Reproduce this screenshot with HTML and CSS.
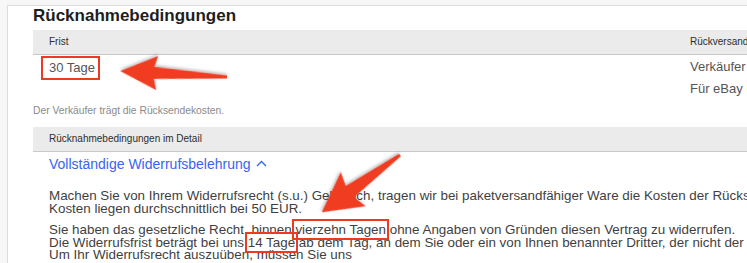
FILE: index.html
```html
<!DOCTYPE html>
<html lang="de">
<head>
    <meta charset="UTF-8">
    <meta name="viewport" content="width=device-width, initial-scale=1.0">
    <title>Rücknahmebedingungen</title>
    <link rel="stylesheet" href="styles.css">
</head>
<body>
    <div class="frame">
        <h2 class="title">Rücknahmebedingungen</h2>

        <div class="table">
            <div class="head">Frist</div>
            <div class="head head-right">Rückversandkosten</div>
            <div class="cell"><span class="mark mark-big">30 Tage</span></div>
            <div class="cell cell-right">Verkäufer trägt Rückversandkosten<br>Für eBay Plus-Artikel kostenlos</div>
        </div>

        <p class="note">Der Verkäufer trägt die Rücksendekosten.</p>

        <div class="head head-wide">Rücknahmebedingungen im Detail</div>

        <div class="details">
            <a class="toggle" href="#">Vollständige Widerrufsbelehrung<svg class="chevron" width="11" height="7" viewBox="0 0 11 7"><path d="M1 6 L5.5 1.5 L10 6" fill="none" stroke="#3665f3" stroke-width="1.4"/></svg></a>

            <p class="text">Machen Sie von Ihrem Widerrufsrecht (s.u.) Gebrauch, tragen wir bei paketversandfähiger Ware die Kosten der Rücksendung. Die<br>Kosten liegen durchschnittlich bei 50 EUR.</p>

            <p class="text">Sie haben das gesetzliche Recht, binnen <span class="mark">vierzehn Tagen</span> ohne Angaben von Gründen diesen Vertrag zu widerrufen.<br>Die Widerrufsfrist beträgt bei uns <span class="mark">14 Tage</span> ab dem Tag, an dem Sie oder ein von Ihnen benannter Dritter, der nicht der Beförderer ist,<br>Um Ihr Widerrufsrecht auszuüben, müssen Sie uns<br>Gestatten Sie GmbH</p>
        </div>
    </div>

    <!-- Pfeile der Markierung -->
    <svg class="arrows" width="747" height="263" viewBox="0 0 747 263">
        <defs>
            <filter id="shadow" x="-20%" y="-20%" width="140%" height="140%">
                <feDropShadow dx="0" dy="1.5" stdDeviation="1.5" flood-color="#000" flood-opacity="0.3"/>
            </filter>
        </defs>
        <polygon filter="url(#shadow)" fill="#f03d24"
            transform="translate(227 77) rotate(183.2)"
            points="0,-1.5 73,-6 70,-17 107,0 70,17 73,6 0,1.5"/>
        <polygon filter="url(#shadow)" fill="#f03d24"
            transform="translate(400 155) rotate(143.8)"
            points="0,-1.5 62,-7 58,-21 97,0 58,21 62,7 0,1.5"/>
    </svg>
</body>
</html>
```

FILE: styles.css
```css
body {
    margin: 0;
    background-color: #f7f7f7;
    font-family: 'Liberation Sans', Arial, sans-serif;
    color: #3f3f3f;
    overflow: hidden;
    height: 263px;
}
.frame {
    margin: 5px 0 0 7px;
    width: 900px;
    height: 400px;
    background-color: #fff;
    border-top: 1px solid #dcdcdc;
    border-left: 1px solid #dcdcdc;
    padding-left: 25px;
}
.title {
    margin: 0 0 4px;
    font-size: 17px;
    line-height: 20px;
    font-weight: 700;
    color: #1e1e1e;
}
.table {
    display: grid;
    grid-template-columns: 641px 1fr;
}
.head {
    height: 24px;
    line-height: 24px;
    padding-left: 16px;
    background-color: #ebebeb;
    border-bottom: 1px solid #c9c9c9;
    font-size: 10px;
    color: #2e2e2e;
    white-space: nowrap;
}
.cell {
    padding: 1px 0 0 16px;
    font-size: 13px;
    line-height: 22px;
    color: #555;
    white-space: nowrap;
}
.mark {
    outline: 2px solid #ee3a22;
    outline-offset: 1px;
}
.mark-big {
    display: inline-block;
    outline: none;
    border: 2px solid #ee3a22;
    line-height: 20px;
    padding: 0 3px 0 6px;
    margin-left: -8px;
}
.note {
    margin: 4px 0 9px;
    font-size: 10.3px;
    line-height: 14px;
    color: #8a8a8a;
}
.details {
    padding-left: 16px;
}
.toggle {
    display: block;
    margin-top: 3px;
    font-size: 14px;
    line-height: 18px;
    color: #3665f3;
    text-decoration: none;
}
.chevron {
    margin-left: 5px;
    vertical-align: 2px;
}
.text {
    margin: 17px 0 0;
    font-size: 13.4px;
    line-height: 12.5px;
    white-space: nowrap;
}
.text + .text {
    margin-top: 9px;
}
.arrows {
    position: absolute;
    top: 0;
    left: 0;
    pointer-events: none;
}
```
